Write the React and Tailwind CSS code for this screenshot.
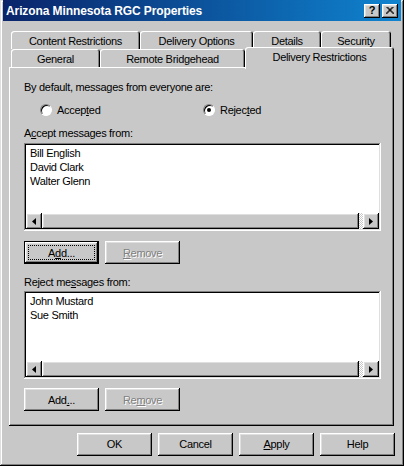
import React from 'react';

const raised =
  'shadow-[inset_-1px_-1px_#000,inset_1px_1px_#fff,inset_-2px_-2px_#808080,inset_2px_2px_#dfdfdf]';
const sunken =
  'shadow-[inset_-1px_-1px_#fff,inset_1px_1px_#808080,inset_-2px_-2px_#dfdfdf,inset_2px_2px_#000]';
const tabEdge =
  'rounded-t-[3px] shadow-[inset_1px_1px_#fff,inset_-1px_0_#000,inset_-2px_0_#808080]';

function Tab({ children, className }) {
  return (
    <div className={`h-[18px] bg-[#c8c8c8] flex justify-center pt-[3px] leading-[14px] ${tabEdge} ${className}`}>
      {children}
    </div>
  );
}

function Button({ children, className = '', disabled, focused }) {
  if (focused) {
    return (
      <div className={`h-[23px] border border-black bg-[#c8c8c8] ${className}`}>
        <div className={`h-full w-full p-[3px] ${raised}`}>
          <div className="h-full w-full border border-dotted border-black flex items-center justify-center">
            {children}
          </div>
        </div>
      </div>
    );
  }
  return (
    <div
      className={`h-[23px] bg-[#c8c8c8] flex items-center justify-center ${raised} ${
        disabled ? 'text-[#808080] [text-shadow:1px_1px_0_#fff]' : ''
      } ${className}`}
    >
      {children}
    </div>
  );
}

function Radio({ checked, children, className }) {
  return (
    <div className={`flex items-center gap-[5px] ${className}`}>
      <div className="w-[12px] h-[12px] rounded-full border border-t-[#808080] border-l-[#808080] border-r-white border-b-white bg-white shadow-[inset_1px_1px_#000] flex items-center justify-center">
        {checked && <div className="w-[4px] h-[4px] rounded-full bg-black" />}
      </div>
      <span>{children}</span>
    </div>
  );
}

function Arrow({ dir }) {
  return (
    <div className={`w-[16px] h-[16px] bg-[#c8c8c8] flex items-center justify-center ${raised}`}>
      <svg width="4" height="7" viewBox="0 0 4 7">
        {dir === 'left' ? <path d="M4 0 L0 3.5 L4 7 Z" fill="#000" /> : <path d="M0 0 L4 3.5 L0 7 Z" fill="#000" />}
      </svg>
    </div>
  );
}

function ListBox({ items }) {
  return (
    <div className={`w-[357px] h-[88px] bg-white p-[2px] flex flex-col ${sunken}`}>
      <div className="flex-1 pl-[4px] pt-[1px]">
        {items.map((it) => (
          <div key={it} className="leading-[14px]">
            {it}
          </div>
        ))}
      </div>
      <div className="h-[16px] flex bg-[#c8c8c8]">
        <Arrow dir="left" />
        <div className={`flex-1 bg-[#c8c8c8] ${raised}`} />
        <div className="w-[4px] bg-[repeating-conic-gradient(#fff_0_25%,#c8c8c8_0_50%)] bg-[length:2px_2px]" />
        <Arrow dir="right" />
      </div>
    </div>
  );
}

export default function App() {
  return (
    <div className="w-[404px] h-[466px] bg-[#c8c8c8] px-[3px] text-[11px] tracking-[-0.3px] text-black font-['Liberation_Sans',Arial,sans-serif] shadow-[inset_-1px_-1px_#000,inset_1px_1px_#dfdfdf,inset_-2px_-2px_#808080,inset_2px_2px_#fff] overflow-hidden">
      {/* title bar */}
      <div className="h-[21px] bg-gradient-to-r from-[#0a246a] to-[#1084d0] flex items-center justify-between pl-[3px] pr-[3px]">
        <span className="text-white font-bold text-[12px] tracking-[-0.1px]">Arizona Minnesota RGC Properties</span>
        <div className="flex gap-[2px]">
          <div className={`w-[16px] h-[14px] bg-[#c8c8c8] flex items-center justify-center font-bold text-[11px] leading-none ${raised}`}>
            ?
          </div>
          <div className={`w-[16px] h-[14px] bg-[#c8c8c8] flex items-center justify-center ${raised}`}>
            <svg width="8" height="7" viewBox="0 0 8 7">
              <path d="M0.5 0 L7.5 7 M1.5 0 L8.5 7 M7.5 0 L0.5 7 M6.5 0 L-0.5 7" stroke="#000" strokeWidth="1" />
            </svg>
          </div>
        </div>
      </div>

      {/* tabs */}
      <div className="ml-[6px] w-[385px] mt-[10px]">
        <div className="flex pl-[2px]">
          <Tab className="w-[129px]">Content Restrictions</Tab>
          <Tab className="w-[113px]">Delivery Options</Tab>
          <Tab className="w-[68px]">Details</Tab>
          <Tab className="w-[70px]">Security</Tab>
        </div>
        <div className="flex items-end h-[18px] pl-[2px]">
          <Tab className="w-[89px]">General</Tab>
          <Tab className="w-[145px]">Remote Bridgehead</Tab>
          <div className={`w-[149px] h-[22px] -mb-[2px] relative z-10 bg-[#c8c8c8] flex justify-center pt-[3px] leading-[14px] ${tabEdge}`}>
            Delivery Restrictions
          </div>
        </div>
      </div>

      {/* sheet */}
      <div className="ml-[6px] w-[385px] h-[359px] pl-[15px] pt-[13px] shadow-[inset_-1px_-1px_#000,inset_1px_1px_#fff,inset_-2px_-2px_#808080] leading-[14px]">
        <div>By default, messages from everyone are:</div>
        <div className="mt-[9px] flex h-[14px]">
          <Radio className="ml-[16px] w-[163px]">
            Accep<span className="underline">t</span>ed
          </Radio>
          <Radio checked>
            Rejec<span className="underline">t</span>ed
          </Radio>
        </div>
        <div className="mt-[9px]">
          A<span className="underline">c</span>cept messages from:
        </div>
        <div className="mt-[3px]">
          <ListBox items={['Bill English', 'David Clark', 'Walter Glenn']} />
        </div>
        <div className="mt-[10px] flex gap-[6px]">
          <Button focused className="w-[75px]">
            A<span className="underline">d</span>d...
          </Button>
          <Button disabled className="w-[75px]">
            <span className="underline">R</span>emove
          </Button>
        </div>
        <div className="mt-[11px]">
          Reject me<span className="underline">s</span>sages from:
        </div>
        <div className="mt-[2px]">
          <ListBox items={['John Mustard', 'Sue Smith']} />
        </div>
        <div className="mt-[9px] flex gap-[6px]">
          <Button className="w-[75px]">
            Add<span className="underline">.</span>..
          </Button>
          <Button disabled className="w-[75px]">
            Re<span className="underline">m</span>ove
          </Button>
        </div>
      </div>

      {/* dialog buttons */}
      <div className="ml-[74px] mt-[7px] flex gap-[6px]">
        <Button className="w-[75px]">OK</Button>
        <Button className="w-[75px]">Cancel</Button>
        <Button className="w-[75px]">
          <span className="underline">A</span>pply
        </Button>
        <Button className="w-[75px]">Help</Button>
      </div>
    </div>
  );
}
